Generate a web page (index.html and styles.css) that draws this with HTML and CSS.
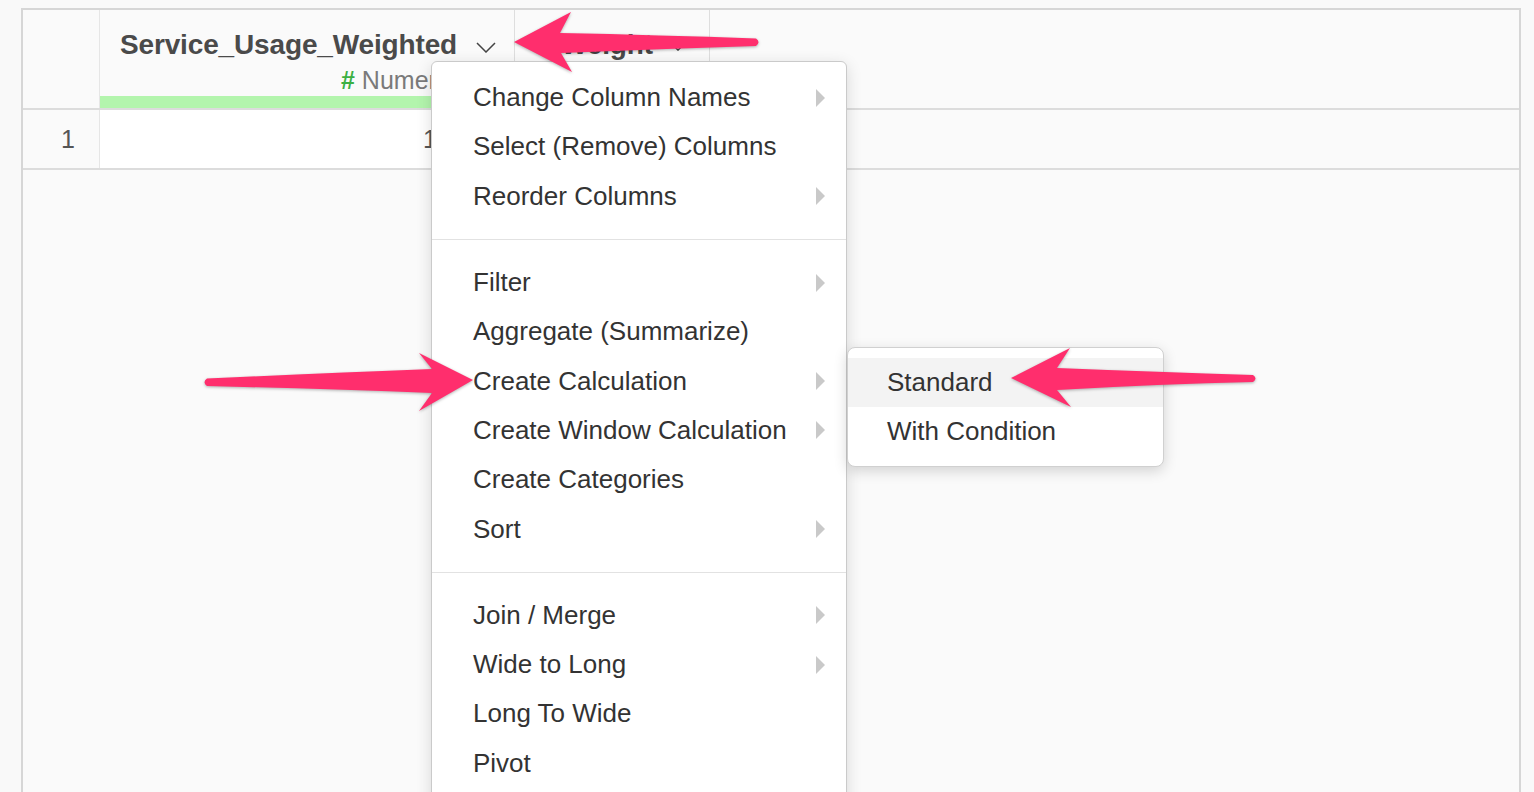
FILE: index.html
```html
<!DOCTYPE html>
<html>
<head>
<meta charset="utf-8">
<link rel="stylesheet" href="styles.css">
</head>
<body>
<div class="page">
  <div class="table">
    <div class="row header">
      <div class="cell rownum"></div>
      <div class="cell col col1">
        <div class="col-title"><span class="title">Service_Usage_Weighted</span><svg class="chev" viewBox="0 0 20 11" width="20" height="11"><path d="M1 1 L10 10 L19 1" fill="none" stroke="#444" stroke-width="1.5"/></svg></div>
        <div class="col-type"><span class="hash">#</span> Numeric</div>
        <div class="bar"></div>
      </div>
      <div class="cell col col2">
        <div class="col-title"><span class="title">Weight</span><svg class="chev" viewBox="0 0 20 11" width="14" height="8"><path d="M1 1 L10 10 L19 1" fill="none" stroke="#444" stroke-width="2"/></svg></div>
      </div>
      <div class="cell rest"></div>
    </div>
    <div class="row data">
      <div class="cell rownum num">1</div>
      <div class="cell col1 val">1</div>
      <div class="cell col2 val2"></div>
      <div class="cell rest"></div>
    </div>
  </div>
</div>

<div class="menu main-menu">
  <div class="group first">
    <div class="item sub">Change Column Names</div>
    <div class="item">Select (Remove) Columns</div>
    <div class="item sub">Reorder Columns</div>
  </div>
  <div class="group">
    <div class="item sub">Filter</div>
    <div class="item">Aggregate (Summarize)</div>
    <div class="item sub">Create Calculation</div>
    <div class="item sub">Create Window Calculation</div>
    <div class="item">Create Categories</div>
    <div class="item sub">Sort</div>
  </div>
  <div class="group">
    <div class="item sub">Join / Merge</div>
    <div class="item sub">Wide to Long</div>
    <div class="item">Long To Wide</div>
    <div class="item">Pivot</div>
  </div>
</div>

<div class="menu sub-menu">
  <div class="item active">Standard</div>
  <div class="item">With Condition</div>
</div>

<svg class="arrows" width="1534" height="792" viewBox="0 0 1534 792">
  <g fill="#ff2e6d">
    <path d="M514 42 L571 12 L560 33 Q660 35 756 38.5 Q761 42 756 46 Q660 49 561 53 L572 72 Z"/>
    <path d="M473 380 L419 353 L432 369 Q330 373 207 378.5 Q202 382 207 386 Q330 389 432 393 L419 411 Z"/>
    <path d="M1011 378 L1070 348 L1057 368 Q1160 372 1253 375 Q1258 378.5 1253 382 Q1160 384 1057 390 L1071 407 Z"/>
  </g>
</svg>
</body>
</html>
```

FILE: styles.css
```css
html, body {
  margin: 0;
  padding: 0;
  height: 792px;
  overflow: hidden;
  background: #f9f9f9;
  font-family: "Liberation Sans", Arial, Helvetica, sans-serif;
}

.page {
  padding: 8px 13px 0 21px;
}

.table {
  border: 2px solid #d6d6d6;
  border-bottom: none;
  height: 800px;
  background: #fafafa;
}

.row {
  display: flex;
  border-bottom: 2px solid #dcdcdc;
}

.header {
  height: 98px;
}

.data {
  height: 58px;
}

.cell {
  box-sizing: border-box;
  flex: none;
}

.rownum {
  width: 77px;
  border-right: 1px solid #e6e6e6;
}

.col1 {
  width: 415px;
  border-right: 1px solid #dedede;
}

.col2 {
  width: 195px;
  border-right: 1px solid #dedede;
}

.rest {
  flex: 1;
}

.col {
  display: flex;
  flex-direction: column;
}

.col-title {
  display: flex;
  align-items: center;
  height: 38px;
  margin-top: 16px;
  padding-left: 20px;
}

.title {
  font-weight: bold;
  font-size: 28px;
  color: #4a4a4a;
  letter-spacing: -0.15px;
}

.chev {
  margin-left: 19px;
  margin-top: 4px;
}

.col2 .col-title {
  padding-left: 46px;
}

.col2 .chev {
  margin-left: 18px;
}

.col-type {
  height: 32px;
  padding-left: 241px;
  font-size: 25px;
  line-height: 32px;
  color: #7a7a7a;
}

.hash {
  color: #3cb043;
  font-weight: bold;
}

.bar {
  height: 12px;
  background: #b3f5ad;
  margin-top: auto;
}

.num {
  font-size: 25px;
  color: #555;
  text-align: right;
  padding-right: 24px;
  line-height: 58px;
}

.val {
  background: #fff;
  font-size: 25px;
  color: #555;
  text-align: right;
  padding-right: 77px;
  line-height: 58px;
}

.menu {
  position: absolute;
  background: #fff;
  box-sizing: border-box;
  border: 1px solid #cacaca;
  border-radius: 6px;
  box-shadow: 0 4px 16px rgba(0, 0, 0, 0.14);
  color: #333;
  font-size: 26px;
}

.main-menu {
  left: 431px;
  top: 61px;
  width: 416px;
  height: 800px;
}

.group {
  padding: 18px 0;
  border-top: 1px solid #e2e2e2;
}

.group.first {
  padding-top: 11px;
  border-top: none;
}

.item {
  height: 49.3px;
  display: flex;
  align-items: center;
  padding-left: 41px;
  padding-right: 21px;
}

.item.sub::after {
  content: "";
  margin-left: auto;
  border-left: 9px solid #c9c9c9;
  border-top: 9px solid transparent;
  border-bottom: 9px solid transparent;
}

.sub-menu {
  left: 847px;
  top: 347px;
  width: 317px;
  padding: 10px 0;
  border-radius: 8px;
  border-color: #d0d0d0;
  box-shadow: 0 4px 14px rgba(0, 0, 0, 0.16);
}

.sub-menu .item {
  height: 49px;
  padding-left: 39px;
}

.sub-menu .active {
  background: #f3f3f3;
}

.arrows {
  position: absolute;
  left: 0;
  top: 0;
  filter: drop-shadow(0 1px 1.5px rgba(0, 0, 0, 0.3));
}
```
